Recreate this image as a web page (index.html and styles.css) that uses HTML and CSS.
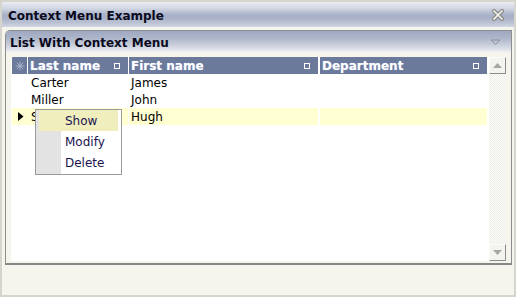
FILE: index.html
```html
<!DOCTYPE html>
<html>
<head>
<meta charset="utf-8">
<link rel="stylesheet" href="styles.css">
</head>
<body>
<div class="window">
  <div class="titlebar">
    <span class="title">Context Menu Example</span>
    <svg class="close" width="12" height="12" viewBox="0 0 12 12">
      <path d="M2 2 L10 10 M10 2 L2 10" stroke="#8a8a84" stroke-width="4" stroke-linecap="square"/>
      <path d="M2 2 L10 10 M10 2 L2 10" stroke="#f2f2ee" stroke-width="1.6" stroke-linecap="square"/>
    </svg>
  </div>
  <div class="panel">
    <div class="panel-head">
      <span class="title">List With Context Menu</span>
      <svg class="collapse" width="11" height="7" viewBox="0 0 11 7">
        <path d="M1 1 H10 L5.5 5.5 Z" fill="none" stroke="#8b90a2" stroke-width="1"/>
      </svg>
    </div>
    <div class="panel-body">
      <div class="list">
        <div class="grid">
          <div class="hrow">
            <div class="hcell corner">
              <svg width="10" height="10" viewBox="0 0 10 10"><path d="M5 0.5 V9.5 M0.5 5 H9.5 M1.8 1.8 L8.2 8.2 M8.2 1.8 L1.8 8.2" stroke="#a9b3c9" stroke-width="1"/></svg>
            </div>
            <div class="hcell c1"><span>Last name</span><i class="sq"></i></div>
            <div class="hcell c2"><span>First name</span><i class="sq"></i></div>
            <div class="hcell c3"><span>Department</span><i class="sq"></i></div>
          </div>
          <div class="row">
            <div class="ind"></div>
            <div class="cell c1">Carter</div>
            <div class="cell c2">James</div>
            <div class="cell c3"></div>
          </div>
          <div class="row">
            <div class="ind"></div>
            <div class="cell c1">Miller</div>
            <div class="cell c2">John</div>
            <div class="cell c3"></div>
          </div>
          <div class="row sel">
            <div class="ind"><svg width="6" height="9" viewBox="0 0 6 9"><path d="M0 0 L5.5 4.5 L0 9 Z" fill="#000"/></svg></div>
            <div class="cell c1">Smith</div>
            <div class="cell c2">Hugh</div>
            <div class="cell c3"></div>
          </div>
        </div>
        <div class="scrollbar">
          <div class="sbtn"><svg width="9" height="5" viewBox="0 0 9 5"><path d="M0 5 L4.5 0 L9 5 Z" fill="#a6a6a6"/></svg></div>
          <div class="track"></div>
          <div class="sbtn"><svg width="9" height="5" viewBox="0 0 9 5"><path d="M0 0 L4.5 5 L9 0 Z" fill="#a6a6a6"/></svg></div>
        </div>
        <div class="menu">
          <div class="mi active">Show</div>
          <div class="mi">Modify</div>
          <div class="mi">Delete</div>
        </div>
      </div>
    </div>
  </div>
  <div class="footer"></div>
</div>
</body>
</html>
```
FILE: styles.css
```css
html, body {
  margin: 0;
  padding: 0;
}
body {
  width: 516px;
  height: 297px;
  overflow: hidden;
  font-family: "DejaVu Sans", Verdana, sans-serif;
  font-size: 12px;
  color: #000;
  background: #f5f5ee;
}
.window {
  box-sizing: border-box;
  width: 516px;
  height: 297px;
  border: 2px solid #d6d5cd;
  background: #f5f5ee;
  display: flex;
  flex-direction: column;
}
.titlebar {
  height: 25px;
  box-sizing: border-box;
  flex: none;
  display: flex;
  align-items: center;
  justify-content: space-between;
  padding: 3px 10px 0 6px;
  background: linear-gradient(#e9ecf2 0%, #d2d7e3 25%, #aab3c9 50%, #a8b1c7 62%, #bcc3d4 85%, #d3d8e3 100%);
}
.title {
  font-weight: bold;
  font-size: 12px;
  color: #0a0a1e;
}
.close {
  display: block;
  margin-top: -2px;
}
.panel {
  flex: none;
  margin: 3px 2px 0 3px;
  border: 1px solid #8c8c8c;
  border-bottom: 2px solid #878787;
  border-radius: 5px 0 0 0;
  background: #f5f5ee;
  display: flex;
  flex-direction: column;
}
.panel-head {
  height: 21px;
  box-sizing: border-box;
  display: flex;
  align-items: center;
  justify-content: space-between;
  padding: 2px 10px 0 4px;
  border-radius: 4px 0 0 0;
  background: linear-gradient(#9ea8bf 0%, #aeb6ca 35%, #ccd1dd 70%, #eceef2 100%);
}
.collapse {
  display: block;
}
.panel-body {
  padding: 5px 5px 2px 5px;
}
.list {
  position: relative;
  height: 204px;
  background: #fff;
  display: flex;
  padding-left: 1px;
}
.grid {
  flex: none;
  width: 476px;
}
.hrow {
  display: flex;
  height: 17px;
}
.hcell {
  background: #6b7a9b;
  color: #fff;
  font-weight: bold;
  display: flex;
  align-items: center;
  justify-content: space-between;
  padding: 0 8px 0 2px;
  box-sizing: border-box;
  height: 17px;
}
.hcell span {
  text-shadow: 0 0 1px #aab6e0;
}
.corner {
  width: 15px;
  flex: none;
  padding: 0;
  justify-content: center;
  margin-right: 1px;
}
.corner svg { display: block; }
.c1 { width: 100px; flex: none; margin-right: 1px; }
.c2 { width: 189px; flex: none; margin-right: 2px; }
.c3 { width: 167px; flex: none; }
.sq {
  width: 4px;
  height: 4px;
  border: 1px solid #fff;
  display: block;
}
.row {
  display: flex;
  height: 17px;
}
.ind {
  width: 16px;
  flex: none;
  display: flex;
  align-items: center;
  justify-content: center;
  padding-left: 2px;
  box-sizing: border-box;
}
.ind svg { display: block; }
.cell {
  box-sizing: border-box;
  padding: 1px 0 0 3px;
  line-height: 16px;
  white-space: nowrap;
}
.cell.c2 { padding-left: 2px; }
.row.sel .cell,
.row.sel .ind {
  background: #ffffd2;
}
.scrollbar {
  flex: none;
  width: 17px;
  margin-left: 1px;
  display: flex;
  flex-direction: column;
  background-color: #f3f3ee;
  background-image: repeating-conic-gradient(#fbfbf7 0 25%, #efefe8 0 50%);
  background-size: 2px 2px;
}
.sbtn {
  height: 17px;
  box-sizing: border-box;
  background: #f4f4ef;
  border: 1px solid;
  border-color: #fbfbf8 #8d8d8d #8d8d8d #fbfbf8;
  display: flex;
  align-items: center;
  justify-content: center;
}
.sbtn svg { display: block; }
.track { flex: 1; }
.menu {
  position: absolute;
  left: 24px;
  top: 52px;
  width: 87px;
  box-sizing: border-box;
  border: 1px solid #9a9a9a;
  background: linear-gradient(90deg, #e3e3e3 0 25px, #fff 25px);
  padding: 0 0 1px 0;
}
.mi {
  height: 21px;
  box-sizing: border-box;
  padding: 1px 0 0 26px;
  line-height: 20px;
  margin: 0 3px 0 3px;
  color: #1a1450;
}
.mi.active {
  background: #efeebc;
}
.footer {
  flex: 1;
  background: #f5f5ee;
}
```
